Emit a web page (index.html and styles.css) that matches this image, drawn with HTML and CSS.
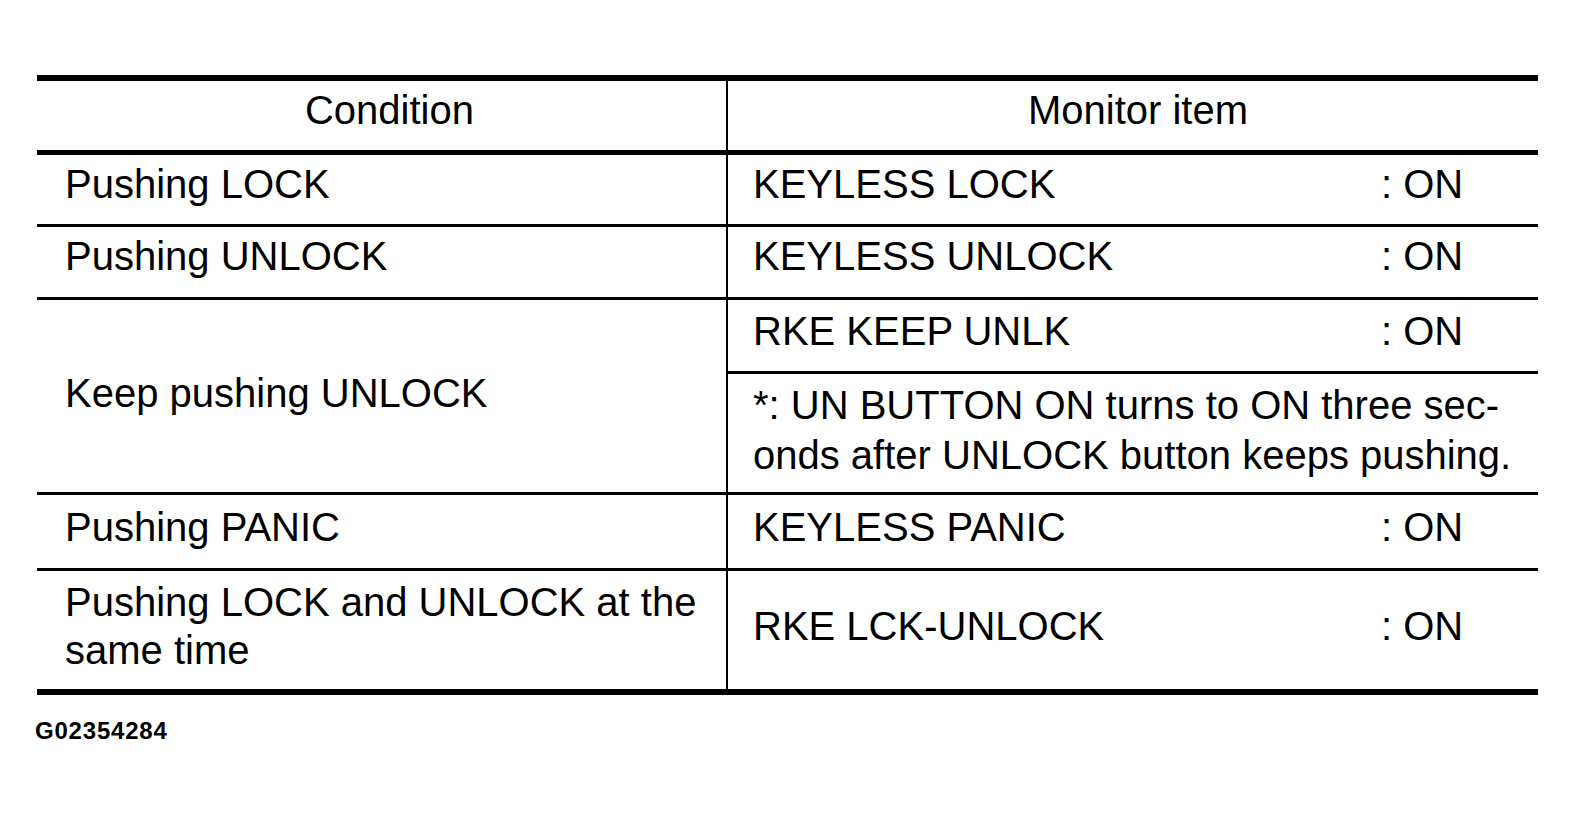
FILE: index.html
```html
<!DOCTYPE html>
<html lang="en">
<head>
<meta charset="utf-8">
<title>Monitor items</title>
<link rel="stylesheet" href="styles.css">
</head>
<body>
<div class="page">
  <table class="monitor">
    <colgroup>
      <col class="col-cond">
      <col class="col-item">
    </colgroup>
    <thead>
      <tr class="row-head">
        <th class="cond">Condition</th>
        <th class="item">Monitor item</th>
      </tr>
    </thead>
    <tbody>
      <tr class="row-1">
        <td class="cond">Pushing LOCK</td>
        <td class="item"><span class="name">KEYLESS LOCK</span><span class="val">: ON</span></td>
      </tr>
      <tr class="row-2">
        <td class="cond">Pushing UNLOCK</td>
        <td class="item"><span class="name">KEYLESS UNLOCK</span><span class="val">: ON</span></td>
      </tr>
      <tr class="row-3a">
        <td class="cond span" rowspan="2">Keep pushing UNLOCK</td>
        <td class="item"><span class="name">RKE KEEP UNLK</span><span class="val">: ON</span></td>
      </tr>
      <tr class="row-3b">
        <td class="item note">*: UN BUTTON ON turns to ON three sec-<br>onds after UNLOCK button keeps pushing.</td>
      </tr>
      <tr class="row-4">
        <td class="cond">Pushing PANIC</td>
        <td class="item"><span class="name">KEYLESS PANIC</span><span class="val">: ON</span></td>
      </tr>
      <tr class="row-5">
        <td class="cond">Pushing LOCK and UNLOCK at the same time</td>
        <td class="item"><span class="name">RKE LCK-UNLOCK</span><span class="val">: ON</span></td>
      </tr>
    </tbody>
  </table>
  <p class="code">G02354284</p>
</div>
</body>
</html>
```

FILE: styles.css
```css
html, body {
  margin: 0;
  padding: 0;
  background: #ffffff;
  color: #000000;
}

body {
  font-family: "Liberation Sans", Arial, sans-serif;
}

.page {
  padding: 75px 0 0 37px;
}

.monitor {
  width: 1501px;
  table-layout: fixed;
  border-collapse: separate;
  border-spacing: 0;
  border-top: 6px solid #000;
  border-bottom: 6px solid #000;
  font-size: 40px;
  line-height: 48px;
}

.col-cond {
  width: 689px;
}

.col-item {
  width: 812px;
}

.monitor th,
.monitor td {
  box-sizing: border-box;
  padding: 3px 20px 15px 28px;
  vertical-align: middle;
  text-align: left;
  font-weight: normal;
  border-bottom: 3px solid #000;
  white-space: normal;
}

.monitor .item {
  border-left: 2px solid #000;
  padding-left: 25px;
}

.monitor th {
  text-align: center;
  border-bottom-width: 5px;
}

.monitor th.cond {
  padding-left: 16px;
  padding-right: 0;
}

.monitor th.item {
  padding-left: 10px;
  padding-right: 0;
}

.row-head th { height: 74px; }
.row-1 td { height: 72px; }
.row-2 td { height: 73px; }
.row-3a td { height: 74px; }
.row-3b td { height: 121px; }
.row-4 td { height: 76px; }
.row-5 td {
  height: 118px;
  border-bottom: none;
}

.row-3a td.item,
.row-4 td,
.row-5 td {
  padding-top: 5px;
  padding-bottom: 14px;
}

.monitor td.span {
  padding-top: 8px;
}

.monitor td.note {
  white-space: nowrap;
  line-height: 50px;
  padding-top: 6px;
  padding-bottom: 12px;
}

.name {
  display: inline-block;
  width: 628px;
}

.val {
  display: inline-block;
}

.code {
  margin: 22px 0 0 -2px;
  font-size: 24px;
  line-height: 28px;
  letter-spacing: 0.8px;
  font-weight: bold;
}
```
